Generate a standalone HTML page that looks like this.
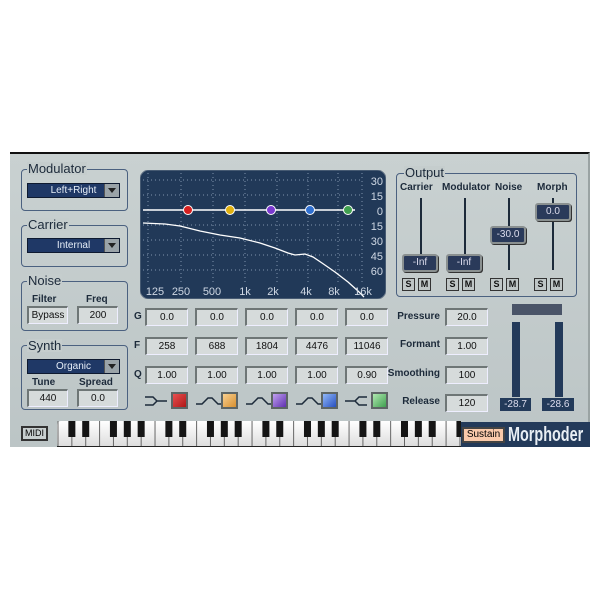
<!DOCTYPE html>
<html><head><meta charset="utf-8"><style>
*{margin:0;padding:0;box-sizing:border-box}
body{width:600px;height:600px;background:#fff;position:relative;overflow:hidden;font-family:"Liberation Sans",sans-serif}
.a{position:absolute}
#panel{left:10px;top:152px;width:580px;height:295px;background:linear-gradient(#c9d1d1,#bcc5c6);border-top:2px solid #111;border-right:2px solid #9aa3a3}
.grp{position:absolute;border:1px solid #4b6180;border-radius:4px}
.gl{position:absolute;font-size:13px;color:#1c2a3a;background:#c5cdcd;padding:0 1px;line-height:13px}
.dd{position:absolute;height:15px;background:#1f3866;border:1px solid #0e1a30;color:#e6eef8;font-size:10px;text-align:center;line-height:13px}
.dd .ar{position:absolute;right:0;top:0;width:15px;height:13px;background:#9aa3a8;border-left:1px solid #555}
.dd .ar:after{content:"";position:absolute;left:3px;top:4px;border-left:4px solid transparent;border-right:4px solid transparent;border-top:5px solid #222}
.fld{position:absolute;height:18px;background:#d6dbdb;border-top:2px solid #6e7676;border-left:2px solid #6e7676;border-bottom:1px solid #eef;border-right:1px solid #eef;font-size:10px;text-align:center;line-height:15px;color:#111}
.lb{position:absolute;font-size:10px;color:#1c2a3a;font-weight:bold}
.rl{position:absolute;font-size:10px;color:#1c2a3a;text-align:right;width:70px;font-weight:bold}
.fad{position:absolute;width:36px;height:18px;background:#2a3a5a;border:2px solid #8a9090;border-radius:3px;color:#dde;font-size:10px;text-align:center;line-height:14px;box-shadow:1px 1px 0 #333}
.sm{position:absolute;width:13px;height:13px;background:#bfc6c6;border:1px solid #333;font-size:9px;text-align:center;line-height:11px;font-weight:bold;color:#111}
.vl{position:absolute;width:2px;background:#1c2a3a}
.sw{position:absolute;width:17px;height:17px;border:2px solid #5d6565}
.ax{font-size:11px;fill:#cfd8e4}
</style></head><body>
<div id="panel" class="a"></div>
<div class="grp" style="left:21px;top:169px;width:107px;height:42px"></div><div class="gl" style="left:27px;top:162px">Modulator</div>
<div class="dd" style="left:27px;top:183px;width:93px">Left+Right<div class="ar"></div></div>
<div class="grp" style="left:21px;top:225px;width:107px;height:42px"></div><div class="gl" style="left:27px;top:218px">Carrier</div>
<div class="dd" style="left:27px;top:238px;width:93px">Internal<div class="ar"></div></div>
<div class="grp" style="left:21px;top:281px;width:107px;height:50px"></div><div class="gl" style="left:27px;top:274px">Noise</div>
<div class="lb" style="left:32px;top:294px">Filter</div><div class="lb" style="left:86px;top:294px">Freq</div>
<div class="fld" style="left:27px;top:306px;width:41px">Bypass</div><div class="fld" style="left:77px;top:306px;width:41px">200</div>
<div class="grp" style="left:21px;top:345px;width:107px;height:65px"></div><div class="gl" style="left:27px;top:339px">Synth</div>
<div class="dd" style="left:27px;top:359px;width:93px">Organic<div class="ar"></div></div>
<div class="lb" style="left:32px;top:377px">Tune</div><div class="lb" style="left:79px;top:377px">Spread</div>
<div class="fld" style="left:27px;top:389px;width:41px">440</div><div class="fld" style="left:77px;top:389px;width:41px">0.0</div>
<svg class="a" style="left:140px;top:170px" width="246" height="129" viewBox="140 170 246 129">
<rect x="140" y="170" width="246" height="129" rx="9" fill="#213958" stroke="#6c7b8c"/>
<g stroke="#7f93ad" stroke-dasharray="1 3" stroke-width="1">
<line x1="143" y1="180" x2="362" y2="180"/><line x1="143" y1="195" x2="362" y2="195"/><line x1="143" y1="225" x2="362" y2="225"/><line x1="143" y1="240" x2="362" y2="240"/><line x1="143" y1="255" x2="362" y2="255"/><line x1="143" y1="270" x2="362" y2="270"/>
<line x1="148" y1="173" x2="148" y2="285"/><line x1="181" y1="173" x2="181" y2="285"/><line x1="213" y1="173" x2="213" y2="285"/><line x1="245" y1="173" x2="245" y2="285"/><line x1="277" y1="173" x2="277" y2="285"/><line x1="308" y1="173" x2="308" y2="285"/><line x1="338" y1="173" x2="338" y2="285"/><line x1="362" y1="173" x2="362" y2="285"/>
</g>
<line x1="143" y1="210" x2="355" y2="210" stroke="#fff" stroke-width="1.5"/>
<polyline fill="none" stroke="#fff" stroke-width="1.3" points="143,223 165,224 180,226 200,231 220,235 240,238 260,243 275,248 288,253 295,255 305,254 313,257 322,263 335,272 348,282 358,291 364,297"/>
<circle cx="188" cy="210" r="4.5" fill="#d62020" stroke="#fff" stroke-width="1"/>
<circle cx="230" cy="210" r="4.5" fill="#e0b010" stroke="#fff" stroke-width="1"/>
<circle cx="271" cy="210" r="4.5" fill="#7a3ad0" stroke="#fff" stroke-width="1"/>
<circle cx="310" cy="210" r="4.5" fill="#3070d0" stroke="#fff" stroke-width="1"/>
<circle cx="348" cy="210" r="4.5" fill="#40a050" stroke="#fff" stroke-width="1"/>
<g class="ax" text-anchor="end"><text x="383" y="185">30</text><text x="383" y="200">15</text><text x="383" y="215">0</text><text x="383" y="230">15</text><text x="383" y="245">30</text><text x="383" y="260">45</text><text x="383" y="275">60</text></g>
<g class="ax" text-anchor="middle"><text x="155" y="295">125</text><text x="181" y="295">250</text><text x="212" y="295">500</text><text x="245" y="295">1k</text><text x="273" y="295">2k</text><text x="306" y="295">4k</text><text x="334" y="295">8k</text><text x="363" y="295">16k</text></g>
</svg>
<div class="lb" style="left:134px;top:311px">G</div><div class="lb" style="left:134px;top:340px">F</div><div class="lb" style="left:134px;top:369px">Q</div>
<div class="fld" style="left:145px;top:308px;width:43px">0.0</div><div class="fld" style="left:195px;top:308px;width:43px">0.0</div><div class="fld" style="left:245px;top:308px;width:43px">0.0</div><div class="fld" style="left:295px;top:308px;width:43px">0.0</div><div class="fld" style="left:345px;top:308px;width:43px">0.0</div>
<div class="fld" style="left:145px;top:337px;width:43px">258</div><div class="fld" style="left:195px;top:337px;width:43px">688</div><div class="fld" style="left:245px;top:337px;width:43px">1804</div><div class="fld" style="left:295px;top:337px;width:43px">4476</div><div class="fld" style="left:345px;top:337px;width:43px">11046</div>
<div class="fld" style="left:145px;top:366px;width:43px">1.00</div><div class="fld" style="left:195px;top:366px;width:43px">1.00</div><div class="fld" style="left:245px;top:366px;width:43px">1.00</div><div class="fld" style="left:295px;top:366px;width:43px">1.00</div><div class="fld" style="left:345px;top:366px;width:43px">0.90</div>
<svg class="a" style="left:140px;top:390px" width="260" height="24">
<g fill="none" stroke="#1c2a3a" stroke-width="1.5">
<path d="M5 7 H13 L17 11 H27 M5 15 H13 L17 11"/>
<path d="M56 14 H62 L68 8 H72 L78 14 H82"/>
<path d="M106 14 H112 L118 8 H122 L128 14 H132"/>
<path d="M156 14 H162 L168 8 H172 L178 14 H182"/>
<path d="M205 11 H215 L219 7 H227 M219 15 H227 L219 15 L215 11"/>
</g></svg>
<div class="sw" style="left:171px;top:392px;background:linear-gradient(135deg,#e85050,#b01818)"></div>
<div class="sw" style="left:221px;top:392px;background:linear-gradient(135deg,#f8d090,#d89030)"></div>
<div class="sw" style="left:271px;top:392px;background:linear-gradient(135deg,#c0a0f0,#6030b0)"></div>
<div class="sw" style="left:321px;top:392px;background:linear-gradient(135deg,#90b8f8,#2850c0)"></div>
<div class="sw" style="left:371px;top:392px;background:linear-gradient(135deg,#b0e8b0,#40a050)"></div>
<div class="rl" style="left:370px;top:311px">Pressure</div><div class="rl" style="left:370px;top:339px">Formant</div><div class="rl" style="left:370px;top:368px">Smoothing</div><div class="rl" style="left:370px;top:396px">Release</div>
<div class="fld" style="left:445px;top:308px;width:43px">20.0</div><div class="fld" style="left:445px;top:337px;width:43px">1.00</div><div class="fld" style="left:445px;top:366px;width:43px">100</div><div class="fld" style="left:445px;top:394px;width:43px">120</div>
<div class="grp" style="left:396px;top:173px;width:181px;height:124px"></div><div class="gl" style="left:404px;top:166px">Output</div>
<div class="lb" style="left:400px;top:182px">Carrier</div><div class="lb" style="left:442px;top:182px">Modulator</div><div class="lb" style="left:495px;top:182px">Noise</div><div class="lb" style="left:537px;top:182px">Morph</div>
<div class="vl" style="left:420px;top:198px;height:72px"></div><div class="vl" style="left:464px;top:198px;height:72px"></div><div class="vl" style="left:508px;top:198px;height:72px"></div><div class="vl" style="left:552px;top:198px;height:72px"></div>
<div class="fad" style="left:402px;top:254px">-Inf</div><div class="fad" style="left:446px;top:254px">-Inf</div><div class="fad" style="left:490px;top:226px">-30.0</div><div class="fad" style="left:535px;top:203px">0.0</div>
<div class="sm" style="left:402px;top:278px">S</div><div class="sm" style="left:418px;top:278px">M</div><div class="sm" style="left:446px;top:278px">S</div><div class="sm" style="left:462px;top:278px">M</div><div class="sm" style="left:490px;top:278px">S</div><div class="sm" style="left:506px;top:278px">M</div><div class="sm" style="left:534px;top:278px">S</div><div class="sm" style="left:550px;top:278px">M</div>
<div class="a" style="left:512px;top:304px;width:50px;height:11px;background:#4a5468"></div>
<div class="a" style="left:512px;top:322px;width:8px;height:75px;background:#233a5a"></div>
<div class="a" style="left:555px;top:322px;width:8px;height:75px;background:#233a5a"></div>
<div class="a" style="left:500px;top:398px;width:31px;height:13px;background:#233a5a;color:#dde;font-size:10px;text-align:center;line-height:13px">-28.7</div>
<div class="a" style="left:542px;top:398px;width:32px;height:13px;background:#233a5a;color:#dde;font-size:10px;text-align:center;line-height:13px">-28.6</div>
<div class="a" style="left:21px;top:426px;width:27px;height:15px;background:#c8cfcf;border:2px solid #333;font-size:9px;text-align:center;line-height:11px">MIDI</div>
<div class="a" style="left:461px;top:422px;width:129px;height:25px;background:#233a5a"></div>
<div class="a" style="left:462px;top:427px;width:43px;height:16px;background:#f9c9aa;border:2px solid #444;font-size:10px;text-align:center;line-height:12px">Sustain</div>
<div class="a" style="left:508px;top:424px;font-size:20px;font-weight:bold;color:#e8eef4;transform:scaleX(0.72);transform-origin:left top;line-height:22px">Morphoder</div>
<svg class="a" style="left:57px;top:421px" width="404" height="26" id="kb"></svg>
<script>
var s=document.getElementById('kb'),h='<defs><linearGradient id="wg" x1="0" y1="0" x2="0" y2="1"><stop offset="0" stop-color="#fff"/><stop offset="1" stop-color="#dcdcdc"/></linearGradient></defs><rect x="0" y="0" width="404" height="26" rx="4" fill="url(#wg)"/>';
var w=13.86,x0=1;
for(var i=0;i<30;i++){h+='<line x1="'+(x0+i*w)+'" y1="0" x2="'+(x0+i*w)+'" y2="26" stroke="#666"/>';}
var pat=[1,1,0,1,1,1,0];
for(var i=0;i<29;i++){if(pat[i%7]){var bx=x0+(i+1)*w-3.5;if(bx<400)h+='<rect x="'+bx+'" y="0" width="7" height="16" fill="#151515"/>';}}
h+='<line x1="0" y1="25.5" x2="404" y2="25.5" stroke="#222"/>';
s.innerHTML=h;
</script>
</body></html>
